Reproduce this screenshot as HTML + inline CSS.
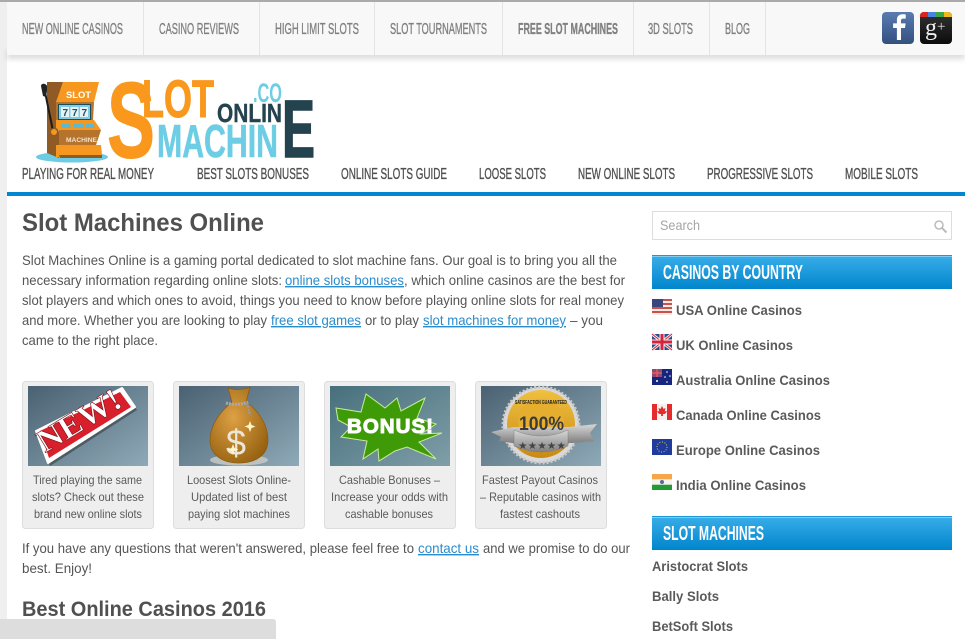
<!DOCTYPE html>
<html><head><meta charset="utf-8"><title>Slot Machines Online</title>
<style>
html,body{margin:0;padding:0;width:965px;height:639px;overflow:hidden;background:#fff}
svg{display:block;position:absolute;left:0;top:0}
text{font-family:"Liberation Sans",sans-serif}
.n{font-size:16px;fill:#808080;stroke:#808080;stroke-width:.35px}
.m{font-size:16px;fill:#505050;stroke:#505050;stroke-width:.35px}
.b{font-size:14px;fill:#555}
.l{font-size:14px;fill:#2a8ccb;text-decoration:underline}
.c{font-size:12px;fill:#5a5a5a}
.s{font-size:14px;font-weight:bold;fill:#5a5a5a}
.h{font-weight:bold;fill:#505050}
.w{font-size:20px;font-weight:bold;fill:#fff}
.lg{font-weight:bold}
</style></head><body>
<svg width="965" height="639" viewBox="0 0 965 639" xmlns="http://www.w3.org/2000/svg">
<defs>
<linearGradient id="hd" x1="0" y1="0" x2="0" y2="1"><stop offset="0" stop-color="#3aaeea"/><stop offset="1" stop-color="#0085cc"/></linearGradient>
<linearGradient id="im" x1="0" y1="0" x2="1" y2="1"><stop offset="0" stop-color="#4a6171"/><stop offset="1" stop-color="#8ea9b7"/></linearGradient>
<linearGradient id="im2" x1="0" y1="0" x2="1" y2="1"><stop offset="0" stop-color="#47707c"/><stop offset="1" stop-color="#7f9ea8"/></linearGradient>
<linearGradient id="fb" x1="0" y1="0" x2="0" y2="1"><stop offset="0" stop-color="#5a7bb0"/><stop offset="1" stop-color="#34507f"/></linearGradient>
<linearGradient id="gp" x1="0" y1="0" x2="0" y2="1"><stop offset="0" stop-color="#333"/><stop offset="1" stop-color="#0c0c0c"/></linearGradient>
<radialGradient id="bag" cx=".4" cy=".4" r=".7"><stop offset="0" stop-color="#dda044"/><stop offset="1" stop-color="#94600f"/></radialGradient>
<linearGradient id="gold" x1="0" y1="0" x2="0" y2="1"><stop offset="0" stop-color="#f0c040"/><stop offset="1" stop-color="#c98a14"/></linearGradient>
<linearGradient id="silver" x1="0" y1="0" x2="0" y2="1"><stop offset="0" stop-color="#d8d8d8"/><stop offset="1" stop-color="#7f7f7f"/></linearGradient>
<filter id="bl" x="-10%" y="-50%" width="120%" height="200%"><feGaussianBlur stdDeviation="3"/></filter>
</defs>

<!-- page chrome -->
<rect x="0" y="0" width="7" height="639" fill="#efefef"/>
<rect x="7" y="50" width="958" height="9" fill="#000" opacity=".14" filter="url(#bl)"/>
<rect x="7" y="2" width="958" height="53" fill="#f8f8f8"/>
<rect x="0" y="0" width="965" height="2" fill="#aaa"/>
<g fill="#e4e4e4"><rect x="143" y="2" width="1" height="53"/><rect x="259" y="2" width="1" height="53"/><rect x="374" y="2" width="1" height="53"/><rect x="502" y="2" width="1" height="53"/><rect x="633" y="2" width="1" height="53"/><rect x="709" y="2" width="1" height="53"/><rect x="765" y="2" width="1" height="53"/></g>

<!-- top nav -->
<text class="n" x="22" y="34" textLength="101" lengthAdjust="spacingAndGlyphs">NEW ONLINE CASINOS</text>
<text class="n" x="159" y="34" textLength="80" lengthAdjust="spacingAndGlyphs">CASINO REVIEWS</text>
<text class="n" x="275" y="34" textLength="84" lengthAdjust="spacingAndGlyphs">HIGH LIMIT SLOTS</text>
<text class="n" x="390" y="34" textLength="97" lengthAdjust="spacingAndGlyphs">SLOT TOURNAMENTS</text>
<text class="n" x="518" y="34" textLength="100" lengthAdjust="spacingAndGlyphs" style="font-weight:bold">FREE SLOT MACHINES</text>
<text class="n" x="648" y="34" textLength="45" lengthAdjust="spacingAndGlyphs">3D SLOTS</text>
<text class="n" x="725" y="34" textLength="25" lengthAdjust="spacingAndGlyphs">BLOG</text>

<!-- social -->
<rect x="882" y="12" width="32" height="32" rx="4" fill="url(#fb)"/>
<path d="M901 40v-12h4l.6-4.600h-4.600v-2.600c0-1.400.5-2.200 2.300-2.200h2.400v-4.100c-.6-.1-1.900-.2-3.300-.2-3.300 0-5.500 2-5.500 5.700v3.400h-3.800v4.600h3.800v12z" fill="#fff"/>
<rect x="920" y="12" width="32" height="32" rx="4" fill="url(#gp)"/>
<path d="M920 17v-1a4 4 0 0 1 4-4h4v5z" fill="#d9261c"/><rect x="928" y="12" width="8" height="5" fill="#4a82e0"/><rect x="936" y="12" width="8" height="5" fill="#3aa648"/><path d="M944 12h4a4 4 0 0 1 4 4v1h-8z" fill="#ecb91f"/>
<text x="925" y="35" style="font-family:'Liberation Serif',serif;font-size:24px;fill:#eee">g</text>
<text x="937" y="31" style="font-family:'Liberation Serif',serif;font-size:15px;fill:#ddd">+</text>

<!-- logo: machine -->
<ellipse cx="72" cy="157" rx="36" ry="5.500" fill="#6dcbe3"/>
<path d="M47 82h16l-7 22v18l3 10v26l-12-5z" fill="#8f5a24"/>
<path d="M63 82h36l-5 20H56z" fill="#f6971f"/>
<path d="M56 102h38l-1 18H56z" fill="#b5732c"/>
<rect x="58" y="104" width="33" height="16" fill="#1f4a5a"/><rect x="59" y="105" width="31" height="14" fill="#7ccde3"/>
<g fill="#e6f3f6"><rect x="61" y="107" width="8" height="10"/><rect x="70.500" y="107" width="8" height="10"/><rect x="80" y="107" width="8" height="10"/></g>
<text x="62.500" y="116" style="font-size:10px;font-weight:bold;fill:#24505e">7</text><text x="72" y="116" style="font-size:10px;font-weight:bold;fill:#24505e">7</text><text x="81.500" y="116" style="font-size:10px;font-weight:bold;fill:#24505e">7</text>
<path d="M56 120h38l7 10H59l-3-2z" fill="#f6971f"/>
<g fill="#5bb9d3"><path d="M61 124h9l1 4h-9z"/><path d="M73 124h10l1 4H74z"/><path d="M85 124h8l2 4h-9z"/></g>
<path d="M59 130h42l-5 15H59z" fill="#b5732c"/>
<path d="M56 145h45l1 10-9 2H56z" fill="#f6971f"/>
<path d="M59 155h43v3H60z" fill="#8f5a24"/>
<path d="M44 87 L53 131" stroke="#1c1c1c" stroke-width="2" fill="none"/>
<path d="M41 86c0-3 5-3 6 0l0 5-1 6-3-1-1-5z" fill="#222"/>
<circle cx="54" cy="132" r="3.500" fill="#f6971f" stroke="#8f5a24"/>
<text x="66" y="98" textLength="25" lengthAdjust="spacingAndGlyphs" style="font-size:9.500px;font-weight:bold;fill:#fff">SLOT</text>
<text x="66" y="142" textLength="31" lengthAdjust="spacingAndGlyphs" style="font-size:6.500px;font-weight:bold;fill:#f3e2cf">MACHINE</text>

<!-- logo: lettering -->
<text class="lg" x="107" y="157.500" textLength="48" lengthAdjust="spacingAndGlyphs" style="font-size:108px;fill:#f9981d;stroke:#f9981d;stroke-width:1px">S</text>
<text class="lg" x="142" y="117" textLength="72" lengthAdjust="spacingAndGlyphs" style="font-size:53px;fill:#f9981d;stroke:#f9981d;stroke-width:1px">LOT</text>
<text class="lg" x="253" y="102" textLength="29" lengthAdjust="spacingAndGlyphs" style="font-size:27px;fill:#6dcde4">.CO</text>
<text class="lg" x="217" y="122" textLength="65" lengthAdjust="spacingAndGlyphs" style="font-size:26px;fill:#24434f;stroke:#24434f;stroke-width:.4px">ONLIN</text>
<text class="lg" x="157" y="157" textLength="121" lengthAdjust="spacingAndGlyphs" style="font-size:46px;fill:#6dcde4;stroke:#6dcde4;stroke-width:.6px">MACHIN</text>
<text class="lg" x="282" y="157" textLength="33" lengthAdjust="spacingAndGlyphs" style="font-size:82px;fill:#24434f;stroke:#24434f;stroke-width:1.500px">E</text>

<!-- main nav -->
<text class="m" x="22" y="179" textLength="132" lengthAdjust="spacingAndGlyphs">PLAYING FOR REAL MONEY</text>
<text class="m" x="197" y="179" textLength="112" lengthAdjust="spacingAndGlyphs">BEST SLOTS BONUSES</text>
<text class="m" x="341" y="179" textLength="106" lengthAdjust="spacingAndGlyphs">ONLINE SLOTS GUIDE</text>
<text class="m" x="479" y="179" textLength="67" lengthAdjust="spacingAndGlyphs">LOOSE SLOTS</text>
<text class="m" x="578" y="179" textLength="97" lengthAdjust="spacingAndGlyphs">NEW ONLINE SLOTS</text>
<text class="m" x="707" y="179" textLength="106" lengthAdjust="spacingAndGlyphs">PROGRESSIVE SLOTS</text>
<text class="m" x="845" y="179" textLength="73" lengthAdjust="spacingAndGlyphs">MOBILE SLOTS</text>
<rect x="7" y="192" width="958" height="4" fill="#0087d0"/>

<!-- content -->
<text class="h" x="22" y="231" textLength="242" lengthAdjust="spacingAndGlyphs" style="font-size:25px">Slot Machines Online</text>
<text class="b" x="22" y="265" textLength="595" lengthAdjust="spacingAndGlyphs">Slot Machines Online is a gaming portal dedicated to slot machine fans. Our goal is to bring you all the</text>
<text class="b" x="22" y="285" textLength="260" lengthAdjust="spacingAndGlyphs">necessary information regarding online slots:</text>
<text class="l" x="285" y="285" textLength="119" lengthAdjust="spacingAndGlyphs">online slots bonuses</text>
<text class="b" x="404" y="285" textLength="221" lengthAdjust="spacingAndGlyphs">, which online casinos are the best for</text>
<text class="b" x="22" y="305" textLength="602" lengthAdjust="spacingAndGlyphs">slot players and which ones to avoid, things you need to know before playing online slots for real money</text>
<text class="b" x="22" y="325" textLength="245" lengthAdjust="spacingAndGlyphs">and more. Whether you are looking to play</text>
<text class="l" x="271" y="325" textLength="90" lengthAdjust="spacingAndGlyphs">free slot games</text>
<text class="b" x="365" y="325" textLength="54" lengthAdjust="spacingAndGlyphs">or to play</text>
<text class="l" x="423" y="325" textLength="143" lengthAdjust="spacingAndGlyphs">slot machines for money</text>
<text class="b" x="570" y="325" textLength="33" lengthAdjust="spacingAndGlyphs">– you</text>
<text class="b" x="22" y="345" textLength="136" lengthAdjust="spacingAndGlyphs">came to the right place.</text>

<!-- cards -->
<g fill="#eee" stroke="#ddd"><rect x="22.500" y="381.500" width="131" height="147" rx="3"/><rect x="173.500" y="381.500" width="131" height="147" rx="3"/><rect x="324.500" y="381.500" width="131" height="147" rx="3"/><rect x="475.500" y="381.500" width="131" height="147" rx="3"/></g>
<rect x="28" y="386" width="120" height="80" fill="url(#im)"/>
<rect x="179" y="386" width="120" height="80" fill="url(#im)"/>
<rect x="330" y="386" width="120" height="80" fill="url(#im2)"/>
<rect x="481" y="386" width="120" height="80" fill="url(#im)"/>

<!-- NEW -->
<path d="M36 431 L122 388 L135 407 L48 463z" fill="#222" opacity=".45" transform="translate(2,3)"/>
<path d="M36 431 L122 388 L135 407 L48 463z" fill="#fff" stroke="#fff" stroke-width="2" stroke-linejoin="round"/>
<path d="M40 431 L120 392 L131 407 L49 458z" fill="#d8202c"/>
<text transform="translate(45,453) rotate(-31)" textLength="92" lengthAdjust="spacingAndGlyphs" style="font-family:'Liberation Serif',serif;font-size:32px;font-weight:bold;fill:#fff;stroke:#7a0d12;stroke-width:.6px">NEW!</text>

<!-- bag -->
<ellipse cx="239" cy="460" rx="29" ry="5.500" fill="#c5c9c4" opacity=".85"/>
<path d="M228 388c6 2 16 2 22-1l-4 15c12 8 22 22 22 38 0 15-12 23-29 23s-29-8-29-23c0-16 12-30 22-38z" fill="url(#bag)" stroke="#8c5a10" stroke-width=".7"/>
<path d="M226 403c7 2 15 2 22-1" stroke="#aaa" stroke-width="3" stroke-dasharray="2 1" fill="none"/>
<path d="M247 403l3 12" stroke="#999" stroke-width="2.500" stroke-dasharray="2 1" fill="none"/>
<text x="226" y="455" style="font-size:36px;fill:#ece6d8">$</text>
<path d="M250 421l1.500 4 4 1.500-4 1.500-1.500 4-1.500-4-4-1.500 4-1.500z" fill="#fff6c8"/>
<path d="M233 444l1.500 4 4 1.500-4 1.500-1.500 4-1.500-4-4-1.500 4-1.500z" fill="#fff6c8"/>

<!-- bonus -->
<polygon points="336,408 361,412 366,394 385,408 397,398 401,411 425,398 417,418 436,424 421,434 442,433 419,442 436,459 407,447 395,451 379,461 378,449 363,459 367,441 341,437 351,427 338,420" fill="#3f9a08" stroke="#c8eb9a" stroke-width="1"/>
<text x="347" y="433" textLength="87" lengthAdjust="spacingAndGlyphs" style="font-size:20px;font-weight:bold;fill:#fff;stroke:#fff;stroke-width:1px;letter-spacing:1px">BONUS!</text>

<!-- badge -->
<circle cx="541" cy="425" r="38" fill="#d9d9d9" stroke="#c9c9c9" stroke-width="3" stroke-dasharray="2 2"/>
<circle cx="541" cy="424" r="34" fill="url(#gold)"/>
<circle cx="541" cy="422" r="23" fill="#e5ae2e"/>
<path d="M491 432l22-5 56 0 28-3-7 9 4 8-22 2-60 0-13-2 2-4z" fill="url(#silver)"/>
<path d="M514 430q27 12 54 0v16q-27 12-54 0z" fill="url(#silver)" stroke="#777" stroke-width=".4"/>
<text x="519" y="430" textLength="45" lengthAdjust="spacingAndGlyphs" style="font-size:19px;font-weight:bold;fill:#3b3b3b">100%</text>
<text x="518" y="449" textLength="48" lengthAdjust="spacingAndGlyphs" style="font-size:10px;fill:#444">★★★★★</text>
<text x="515" y="404" textLength="52" lengthAdjust="spacingAndGlyphs" style="font-size:5.500px;font-weight:bold;fill:#222">SATISFACTION GUARANTEED</text>

<!-- card text -->
<text class="c" x="33" y="484" textLength="109" lengthAdjust="spacingAndGlyphs">Tired playing the same</text>
<text class="c" x="32" y="501" textLength="112" lengthAdjust="spacingAndGlyphs">slots? Check out these</text>
<text class="c" x="34" y="518" textLength="108" lengthAdjust="spacingAndGlyphs">brand new online slots</text>
<text class="c" x="187" y="484" textLength="104" lengthAdjust="spacingAndGlyphs">Loosest Slots Online-</text>
<text class="c" x="191" y="501" textLength="96" lengthAdjust="spacingAndGlyphs">Updated list of best</text>
<text class="c" x="188" y="518" textLength="102" lengthAdjust="spacingAndGlyphs">paying slot machines</text>
<text class="c" x="339" y="484" textLength="101" lengthAdjust="spacingAndGlyphs">Cashable Bonuses –</text>
<text class="c" x="331" y="501" textLength="117" lengthAdjust="spacingAndGlyphs">Increase your odds with</text>
<text class="c" x="345" y="518" textLength="88" lengthAdjust="spacingAndGlyphs">cashable bonuses</text>
<text class="c" x="482" y="484" textLength="116" lengthAdjust="spacingAndGlyphs">Fastest Payout Casinos</text>
<text class="c" x="480" y="501" textLength="121" lengthAdjust="spacingAndGlyphs">– Reputable casinos with</text>
<text class="c" x="500" y="518" textLength="80" lengthAdjust="spacingAndGlyphs">fastest cashouts</text>

<text class="b" x="22" y="553" textLength="392" lengthAdjust="spacingAndGlyphs">If you have any questions that weren't answered, please feel free to</text>
<text class="l" x="418" y="553" textLength="61" lengthAdjust="spacingAndGlyphs">contact us</text>
<text class="b" x="483" y="553" textLength="147" lengthAdjust="spacingAndGlyphs">and we promise to do our</text>
<text class="b" x="22" y="573" textLength="70" lengthAdjust="spacingAndGlyphs">best. Enjoy!</text>
<text class="h" x="22" y="616" textLength="244" lengthAdjust="spacingAndGlyphs" style="font-size:21px">Best Online Casinos 2016</text>
<path d="M0 619H273a3 3 0 0 1 3 3V639H0z" fill="#ddd"/>

<!-- sidebar -->
<rect x="652.500" y="211.500" width="299" height="28" fill="#fff" stroke="#ddd"/>
<text x="660" y="230" textLength="40" lengthAdjust="spacingAndGlyphs" style="font-size:14px;fill:#a5a5a5">Search</text>
<circle cx="939" cy="225" r="4" fill="none" stroke="#bbb" stroke-width="1.500"/><path d="M942 228l4.500 4.500" stroke="#bbb" stroke-width="2"/>

<rect x="652" y="255" width="300" height="34" fill="url(#hd)"/><rect x="652" y="255" width="300" height="1" fill="#1c98d8"/><rect x="652" y="256" width="300" height="1" fill="#7fcdf3"/>
<text class="w" x="663" y="279" textLength="140" lengthAdjust="spacingAndGlyphs">CASINOS BY COUNTRY</text>

<!-- flags -->
<g><rect x="652" y="299" width="20" height="16" fill="#f3ece6"/><g fill="#c9524a"><rect x="652" y="299" width="20" height="2"/><rect x="652" y="303" width="20" height="2"/><rect x="652" y="307" width="20" height="2"/><rect x="652" y="311" width="20" height="2"/></g><rect x="652" y="299" width="11" height="8" fill="#39467e"/></g>
<g><rect x="652" y="334" width="20" height="16" fill="#2f4a8f"/><path d="M652 334l20 16M672 334l-20 16" stroke="#eee" stroke-width="3"/><path d="M652 334l20 16M672 334l-20 16" stroke="#d8243a" stroke-width="1"/><rect x="659.500" y="334" width="5" height="16" fill="#f1f1f1"/><rect x="652" y="339.500" width="20" height="5" fill="#f1f1f1"/><rect x="660.500" y="334" width="3" height="16" fill="#d8243a"/><rect x="652" y="340.500" width="20" height="3" fill="#d8243a"/></g>
<g><rect x="652" y="369" width="20" height="16" fill="#16267f"/><rect x="652" y="369" width="10" height="8" fill="#8b4a6e"/><path d="M652 373h10M657 369v8" stroke="#e35b6a" stroke-width="1.500"/><g fill="#fff"><circle cx="657" cy="381" r="1"/><circle cx="667" cy="372" r=".8"/><circle cx="670" cy="376" r=".8"/><circle cx="665" cy="377" r=".8"/><circle cx="667" cy="382" r=".8"/></g></g>
<g><rect x="652" y="404" width="20" height="16" fill="#f4f1ee"/><rect x="652" y="404" width="5" height="16" fill="#e52b2b"/><rect x="667" y="404" width="5" height="16" fill="#e52b2b"/><path d="M662 406l1.500 3 2-1-.7 3.500 2-.7-.6 2-1.700 1.200h-1.600v2h-1.800v-2h-1.600l-1.700-1.200-.6-2 2 .7-.7-3.500 2 1z" fill="#e52b2b"/></g>
<g><rect x="652" y="439" width="20" height="16" fill="#1f3c9c"/><circle cx="662" cy="447" r="5" fill="none" stroke="#d8c75a" stroke-width="1" stroke-dasharray="1 1.600"/></g>
<g><rect x="652" y="474" width="20" height="5.400" fill="#f5a64d"/><rect x="652" y="479.400" width="20" height="5.300" fill="#f5f3ee"/><rect x="652" y="484.700" width="20" height="5.300" fill="#239a35"/><circle cx="662" cy="482" r="2" fill="#5a6a9a"/></g>

<text class="s" x="676" y="315" textLength="126" lengthAdjust="spacingAndGlyphs">USA Online Casinos</text>
<text class="s" x="676" y="350" textLength="117" lengthAdjust="spacingAndGlyphs">UK Online Casinos</text>
<text class="s" x="676" y="385" textLength="154" lengthAdjust="spacingAndGlyphs">Australia Online Casinos</text>
<text class="s" x="676" y="420" textLength="145" lengthAdjust="spacingAndGlyphs">Canada Online Casinos</text>
<text class="s" x="676" y="455" textLength="144" lengthAdjust="spacingAndGlyphs">Europe Online Casinos</text>
<text class="s" x="676" y="490" textLength="130" lengthAdjust="spacingAndGlyphs">India Online Casinos</text>

<rect x="652" y="516" width="300" height="34" fill="url(#hd)"/><rect x="652" y="516" width="300" height="1" fill="#1c98d8"/><rect x="652" y="517" width="300" height="1" fill="#7fcdf3"/>
<text class="w" x="663" y="540" textLength="101" lengthAdjust="spacingAndGlyphs">SLOT MACHINES</text>
<text class="s" x="652" y="571" textLength="96" lengthAdjust="spacingAndGlyphs">Aristocrat Slots</text>
<text class="s" x="652" y="601" textLength="67" lengthAdjust="spacingAndGlyphs">Bally Slots</text>
<text class="s" x="652" y="631" textLength="81" lengthAdjust="spacingAndGlyphs">BetSoft Slots</text>
</svg>
</body></html>
